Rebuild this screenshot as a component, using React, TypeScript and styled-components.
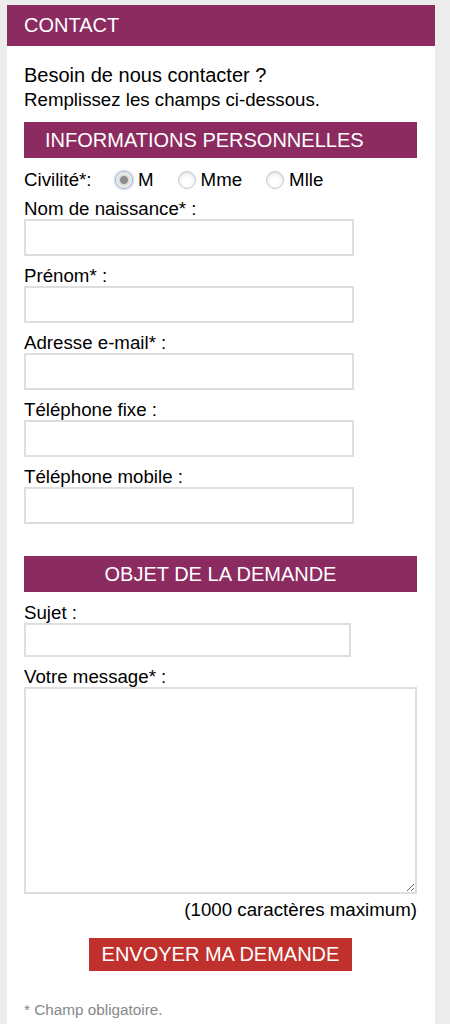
import { createGlobalStyle, styled } from 'styled-components';

const GlobalStyle = createGlobalStyle`
  body {
    margin: 0;
    background: #ececec;
    font-family: "Liberation Sans", Arial, sans-serif;
    color: #000;
  }
`;

const PURPLE = '#8b2b60';

const Panel = styled.div`
  margin: 5px 0 0 7px;
  width: 428px;
  min-height: 1019px;
  background: #fff;
`;

const Header = styled.h1`
  margin: 0;
  height: 41px;
  line-height: 40px;
  padding-left: 17px;
  background: ${PURPLE};
  color: #fff;
  font-size: 20px;
  font-weight: normal;
`;

const Body = styled.div`
  padding: 0 18px 0 17px;
`;

const Intro = styled.p`
  margin: 18px 0 0;
  font-size: 20px;
  line-height: 22px;
`;

const Hint = styled.p`
  margin: 3px 0 0;
  font-size: 18.7px;
  line-height: 22px;
`;

const SectionBar = styled.h2<{ $align?: 'left' | 'center' }>`
  margin: ${p => (p.$align === 'left' ? '11px' : '32px')} 0 0;
  height: 36px;
  line-height: 36px;
  background: ${PURPLE};
  color: #fff;
  font-size: 20px;
  font-weight: normal;
  text-align: ${p => p.$align ?? 'center'};
  padding-left: ${p => (p.$align === 'left' ? '21px' : '0')};
`;

const CivilityRow = styled.div`
  display: flex;
  align-items: center;
  height: 20px;
  margin-top: 12px;
  font-size: 18.7px;
`;

const CivilityLabel = styled.span`
  width: 91px;
`;

const RadioOption = styled.label`
  display: flex;
  align-items: center;
  gap: 5px;
  margin-right: 24px;
`;

const RadioDot = styled.span<{ $checked?: boolean }>`
  width: 18px;
  height: 18px;
  box-sizing: border-box;
  border-radius: 50%;
  border: 1px solid ${p => (p.$checked ? '#a9b4c6' : '#c9c9c9')};
  background: ${p =>
    p.$checked
      ? 'radial-gradient(circle, #8d8d8d 0 3.5px, #d8d8d8 4.5px, #f4f4f4 8px)'
      : 'radial-gradient(circle at 50% 60%, #ffffff 0 4px, #efefef 9px)'};
  box-shadow: ${p => (p.$checked ? '0 0 2px 1px rgba(120,150,210,0.45)' : 'inset 0 1px 1px rgba(0,0,0,0.08)')};
`;

const Field = styled.div<{ $first?: boolean; $afterBar?: boolean }>`
  margin-top: ${p => (p.$first ? '9px' : p.$afterBar ? '11px' : '10px')};
`;

const Label = styled.label`
  display: block;
  font-size: 18.7px;
  line-height: 20px;
`;

const TextInput = styled.input<{ $height?: number; $width?: number }>`
  display: block;
  box-sizing: border-box;
  width: ${p => p.$width ?? 330}px;
  height: ${p => p.$height ?? 37}px;
  margin: 0;
  border: 2px solid #dedede;
  background: #fff;
  outline: none;
`;

const MessageBox = styled.textarea`
  display: block;
  box-sizing: border-box;
  width: 100%;
  height: 207px;
  margin: 0;
  border: 2px solid #dedede;
  outline: none;
  resize: vertical;
`;

const Counter = styled.div`
  margin-top: 6px;
  text-align: right;
  font-size: 18.7px;
  line-height: 20px;
`;

const Actions = styled.div`
  display: flex;
  justify-content: center;
  margin-top: 18px;
`;

const SubmitButton = styled.button`
  height: 33px;
  padding: 0 13px;
  border: none;
  background: #c0312d;
  color: #fff;
  font-family: inherit;
  font-size: 20px;
  line-height: 33px;
`;

const Note = styled.p`
  margin: 30px 0 0;
  font-size: 15.3px;
  line-height: 18px;
  color: #888;
`;

const civilities = [
  { value: 'M', checked: true },
  { value: 'Mme' },
  { value: 'Mlle' },
];

const personalFields = [
  'Nom de naissance* :',
  'Prénom* :',
  'Adresse e-mail* :',
  'Téléphone fixe :',
  'Téléphone mobile :',
];

export default function App() {
  return (
    <>
      <GlobalStyle />
      <Panel>
        <Header>CONTACT</Header>
        <Body>
          <Intro>Besoin de nous contacter ?</Intro>
          <Hint>Remplissez les champs ci-dessous.</Hint>

          <SectionBar $align="left">INFORMATIONS PERSONNELLES</SectionBar>
          <CivilityRow>
            <CivilityLabel>Civilité*:</CivilityLabel>
            {civilities.map(c => (
              <RadioOption key={c.value}>
                <RadioDot $checked={c.checked} />
                {c.value}
              </RadioOption>
            ))}
          </CivilityRow>
          {personalFields.map((label, i) => (
            <Field key={label} $first={i === 0}>
              <Label>{label}</Label>
              <TextInput type="text" />
            </Field>
          ))}

          <SectionBar>OBJET DE LA DEMANDE</SectionBar>
          <Field $afterBar>
            <Label>Sujet :</Label>
            <TextInput type="text" $height={34} $width={327} />
          </Field>
          <Field>
            <Label>Votre message* :</Label>
            <MessageBox />
          </Field>
          <Counter>(1000 caractères maximum)</Counter>
          <Actions>
            <SubmitButton type="button">ENVOYER MA DEMANDE</SubmitButton>
          </Actions>
          <Note>* Champ obligatoire.</Note>
        </Body>
      </Panel>
    </>
  );
}
